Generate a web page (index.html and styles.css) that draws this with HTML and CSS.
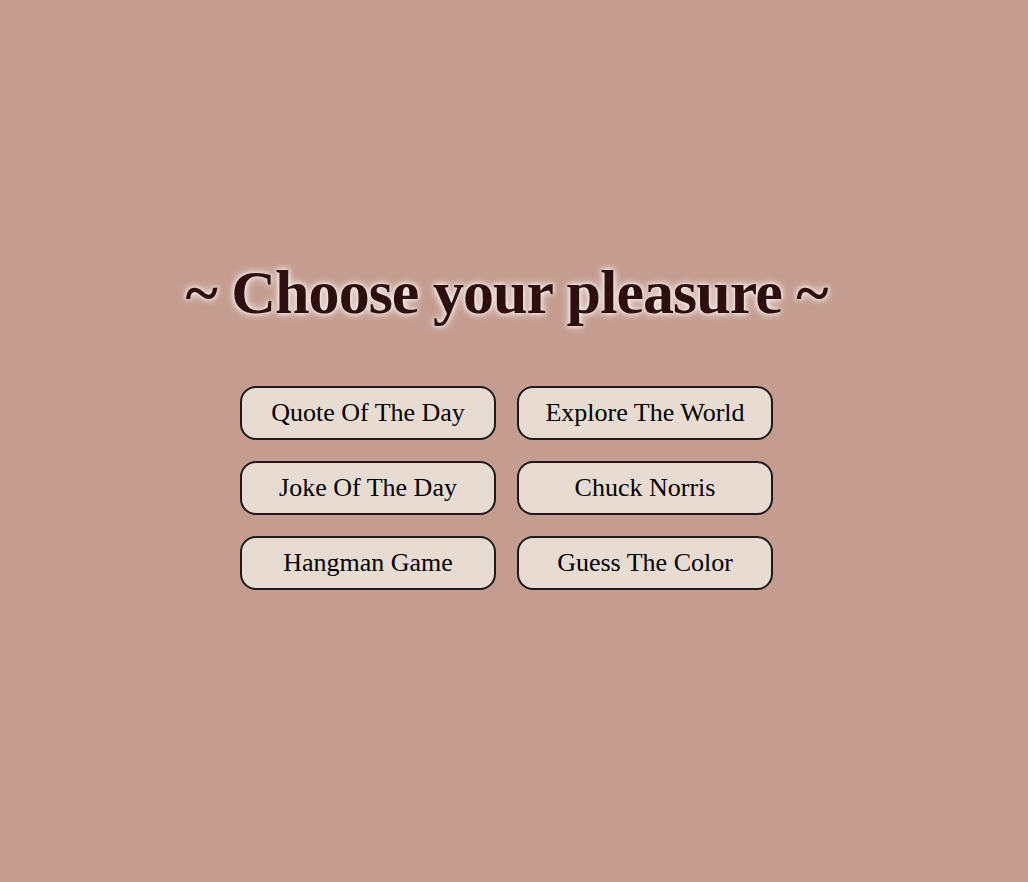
FILE: index.html
```html
<!DOCTYPE html>
<html>
<head>
<meta charset="utf-8">
<link rel="stylesheet" href="styles.css">
</head>
<body>
<main class="page">
  <h1 class="title">~ Choose your pleasure ~</h1>
  <div class="menu">
    <button class="btn">Quote Of The Day</button>
    <button class="btn">Explore The World</button>
    <button class="btn">Joke Of The Day</button>
    <button class="btn">Chuck Norris</button>
    <button class="btn">Hangman Game</button>
    <button class="btn">Guess The Color</button>
  </div>
</main>
</body>
</html>
```
FILE: styles.css
```css
html, body {
  margin: 0;
  padding: 0;
  height: 100%;
}
body {
  background: #c49c90;
  font-family: "Liberation Serif", "Times New Roman", serif;
}
.page {
  width: 1013px;
  padding-top: 255px;
  display: flex;
  flex-direction: column;
  align-items: center;
}
.title {
  margin: 0;
  font-size: 62px;
  font-weight: bold;
  letter-spacing: -0.95px;
  color: #2e0f0f;
  text-shadow: 0 0 10px #fff, 0 0 4px #fff4ee;
  line-height: 74px;
}
.menu {
  margin-top: 57px;
  display: grid;
  grid-template-columns: 256px 256px;
  column-gap: 21px;
  row-gap: 21px;
}
.btn {
  height: 54px;
  background: #e8dcd2;
  border: 2px solid #1e1a1a;
  border-radius: 16px;
  font-family: "Liberation Serif", "Times New Roman", serif;
  font-size: 26px;
  color: #000;
  padding: 0;
}
```
